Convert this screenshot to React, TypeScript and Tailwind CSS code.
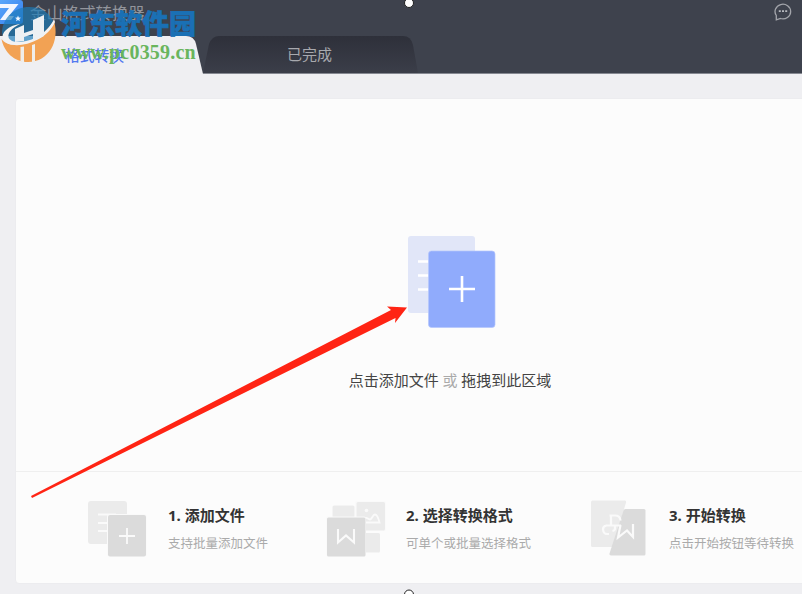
const steps = [
  {
    title: "1. 添加文件",
    desc: "支持批量添加文件",
    icon: <AddIcon />,
    className: "w-[238px]",
  },
  {
    title: "2. 选择转换格式",
    desc: "可单个或批量选择格式",
    icon: <FormatIcon />,
    className: "w-[263px]",
  },
  {
    title: "3. 开始转换",
    desc: "点击开始按钮等待转换",
    icon: <ConvertIcon />,
    className: "w-[230px]",
  },
];

function AddIcon() {
  return (
    <svg width="80" height="64" viewBox="0 0 80 64" fill="none">
      <rect x="0" y="3" width="39" height="43" rx="3" fill="#ebebeb" />
      <path d="M10 16.500h18M10 25h10M10 33h10" stroke="#fafafa" strokeWidth="2" />
      <rect x="19" y="16" width="40" height="43" rx="3" fill="#fafafa" />
      <rect x="20" y="17" width="38" height="41.500" rx="2" fill="#dbdbdb" />
      <path d="M31 38h16M39 30v16" stroke="#fafafa" strokeWidth="1.800" />
    </svg>
  );
}

function FormatIcon() {
  return (
    <svg width="80" height="64" viewBox="0 0 80 64" fill="none">
      <rect x="6.500" y="7.500" width="22" height="30" rx="1.500" fill="#ebebeb" />
      <rect x="30" y="35" width="24" height="19.500" rx="1.500" fill="#ebebeb" />
      <rect x="29" y="3" width="31" height="30" rx="2" fill="#fafafa" />
      <rect x="30.500" y="4" width="28.500" height="28.500" rx="1.500" fill="#ebebeb" />
      <circle cx="40.500" cy="12.500" r="1.800" fill="#fafafa" />
      <path d="M38 24.500h15.500c-1-4-2-8-4.500-8-2.500 0-3 5-5 5s-2.500-2-4-1.500c-1.500.500-2 2.500-2 4.500z" stroke="#fafafa" strokeWidth="1.800" />
      <rect x="0" y="18.500" width="40" height="40" rx="2" fill="#fafafa" />
      <rect x="1" y="19.500" width="38.500" height="39" rx="1.500" fill="#dbdbdb" />
      <path d="M12 31v13.500l8-7 8 7V31" stroke="#fafafa" strokeWidth="2.100" />
    </svg>
  );
}

function ConvertIcon() {
  return (
    <svg width="80" height="64" viewBox="0 0 80 64" fill="none">
      <path d="M3.500 2.500h32q2 0 1.500 2L24 49H3.500q-1.500 0-1.500-1.500V4q0-1.500 1.500-1.500z" fill="#ebebeb" />
      <path d="M36.500 11h18.500q1.500 0 1.500 1.500V56q0 1.500-1.500 1.500h-33q-2 0-1.500-2L34.500 12.500q.500-1.500 2-1.500z" fill="#dbdbdb" />
      <path d="M20.500 17.500h5.500q5 0 5.500 5M22 17.500v9.500M32 27.500H17.500q-3.500.5-3.500 4 .5 4.500 4 4.500h2M26 28v2.500q0 2-2.500 2.500" stroke="#fafafa" strokeWidth="2.200" />
      <path d="M31.500 27L29 39.500 38 32.500l6 6.500V26" stroke="#fafafa" strokeWidth="2.200" />
    </svg>
  );
}

function Watermark() {
  return (
    <div className="pointer-events-none absolute left-0 top-0 flex">
      <svg className="shrink-0" width="61" height="66" viewBox="0 0 61 66">
        <path d="M2 32C3 17 15 7 29 7c13 0 23 7 26 19C44 41 12 50 7 41c-3-4-5-5-5-9z" fill="#1c7cb8" opacity=".68" />
        <path d="M1.500 39C9 50 36 46 54 21c6 20-5 41-26 41C14 62 4 52 1.500 39z" fill="#f2a254" />
        <path d="M20 24C10 25 1 32 3 38c4 14 42 7 52-16l-1-3C48 33 31 43 16 42 4 40 7 30 20 24z" fill="#f3f2f2" />
        <path d="M15 29l9-4v16l-9 1zM33 20l11-5v21l-11 5z" fill="#edf0f3" />
        <path d="M24 33l9-3v4l-9 3z" fill="#edf0f3" />
        <path d="M18 15.500l.8 2 2.200.2-1.700 1.400.5 2.200-1.800-1.200-1.900 1.200.6-2.200-1.700-1.400 2.200-.2z" fill="#edf6ff" />
        <path d="M20.500 47l3.500-.5v16l-3.500-1zM32 45l3-1v19h-3z" fill="#f0eeeb" />
      </svg>
      <div className="flex flex-col">
        <span className="mt-[7px] h-[33px] whitespace-nowrap text-[27px] font-black leading-[33px] text-[#1a70b5] [-webkit-text-stroke:0.6px_#1a70b5]">
          河东软件园
        </span>
        <span className="whitespace-nowrap font-['Liberation_Serif',serif] text-[20px] font-bold leading-[24px] tracking-[0.2px] text-[#69b55d]">
          www.pc0359.cn
        </span>
      </div>
    </div>
  );
}

export default function App() {
  return (
    <div className="relative flex h-[594px] w-[802px] flex-col overflow-hidden bg-[#efeff2] font-['Noto_Sans','Noto_Sans_CJK_SC',sans-serif]">
      {/* Title bar and tabs */}
      <header className="flex h-[74px] shrink-0 flex-col border-b border-[#858891] bg-[#3e424d]">
        <div className="flex h-9 shrink-0 items-start justify-between">
          <div className="flex">
            <svg width="24" height="24" viewBox="0 0 24 24">
              <defs>
                <linearGradient id="app-logo" x1="0" x2="1" y1="0" y2="1">
                  <stop stopColor="#5aa7fa" />
                  <stop offset="1" stopColor="#347dee" />
                </linearGradient>
              </defs>
              <path d="M0 0h20q3 0 3 3v18q0 3-3 3H0z" fill="url(#app-logo)" />
              <path d="M0 4h18.500L9 16h5l-3 4H0l9-12H0z" fill="#f2f6ff" />
            </svg>
            <h1 className="pl-1.5 text-[16.4px] leading-[25px] text-[#93959c]">金山格式转换器</h1>
          </div>
          <svg className="mr-2.5 mt-[3px]" width="18" height="18" viewBox="0 0 18 18" fill="none">
            <path d="M2.300 16.800V12.500A7.800 7.300 0 1 1 6.500 15.500z" stroke="#a3a5ab" strokeWidth="1.300" />
            <path d="M4.800 8.200h2M8 8.200h2M11.200 8.200h2" stroke="#b7b9be" strokeWidth="1.800" />
          </svg>
        </div>
        <nav className="flex h-[38px] shrink-0 text-[15px] leading-[37px]">
          <button className="h-[38px] w-[203px] bg-[#efeff2] pr-[14px] text-center text-[14.8px] font-medium text-[#5278f0] [clip-path:path('M0_0H186Q194_0_196_8L203_38H0Z')]">
            格式转换
          </button>
          <button className="h-[37px] w-[215px] bg-linear-to-b from-[#2e303a] to-[#3b3e49] pr-0.5 text-center text-[#a8a9ae] [clip-path:path('M0_37L6_8Q9_0_16_0H200Q208_0_210_9L215_37Z')]">
            已完成
          </button>
        </nav>
      </header>

      <main className="ml-[15px] mt-6 flex h-[486px] w-[820px] shrink-0 flex-col rounded-[4px] border border-[#ececef] bg-[#fcfcfc]">
        {/* Drop area */}
        <section className="flex h-[373px] w-[870px] flex-col items-center border-b border-[#efefef]">
          <svg className="mt-[136px]" width="90" height="96" viewBox="0 0 90 96" fill="none">
            <rect x="2" y="1" width="67" height="77" rx="3" fill="#e1e6f8" />
            <path d="M12 26.500h12M12 40.500h12M12 54.500h12" stroke="#fff" strokeWidth="2.500" />
            <rect x="22.500" y="16" width="66.500" height="76.500" rx="3" fill="#90abfc" stroke="#b5c6fc" strokeWidth=".7" />
            <path d="M43 54h26M56 41v26" stroke="#fff" strokeWidth="2.600" />
          </svg>
          <p className="mr-[2px] mt-[37px] whitespace-nowrap text-[15px] leading-6 text-[#444]">
            点击添加文件<span className="mx-[3.75px] text-[#aaa]">或</span>拖拽到此区域
          </p>
        </section>

        {/* Steps */}
        <section className="flex pl-[72px] pt-[26px]">
          {steps.map((step) => (
            <div key={step.title} className={`flex shrink-0 ${step.className}`}>
              {step.icon}
              <div>
                <h2 className="mt-[5px] whitespace-nowrap text-[15px] font-bold leading-6 text-[#333]">{step.title}</h2>
                <p className="mt-1.5 whitespace-nowrap text-[12.5px] leading-[22px] text-[#aaa]">{step.desc}</p>
              </div>
            </div>
          ))}
        </section>
      </main>

      <Watermark />

      {/* Pointer arrow and frame handles */}
      <svg className="pointer-events-none absolute inset-0" width="802" height="594" viewBox="0 0 802 594">
        <path d="M31 496L391 310 387 306.500 407 307.500 395 323 395.500 318 32 498z" fill="#ff2414" />
        <circle cx="409" cy="3" r="4.500" fill="#fff" stroke="#222" />
        <circle cx="409" cy="594.500" r="4.500" fill="#fff" stroke="#222" />
      </svg>
    </div>
  );
}
